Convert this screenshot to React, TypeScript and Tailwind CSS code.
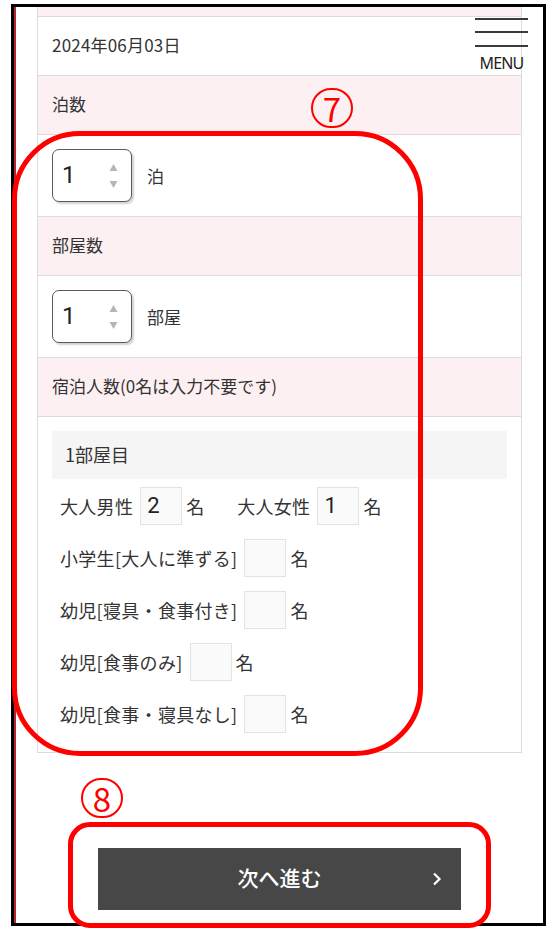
const FONT = { fontFamily: '"Noto Sans CJK JP", "Noto Sans", sans-serif' };

/** Pink heading band of the reservation table. */
function HeadRow({ label }: { label: string }) {
  return (
    <div className="flex h-[59px] items-center border-b border-[#dcdcdc] bg-[#fcf0f2] px-[14px] pb-[3px] text-[17px] text-[#333]">
      {label}
    </div>
  );
}

/** The rounded number box with a native-looking spinner. */
function Stepper({ value, unit }: { value: string; unit: string }) {
  return (
    <div className="flex h-[82px] items-center border-b border-[#dcdcdc] px-[14px]">
      <div className="flex h-[53px] w-[80px] items-center justify-between rounded-[7px] border border-[#5a5a5a] bg-white pl-[9px] pr-[13px] shadow-[2px_2px_2px_0px_rgba(0,0,0,0.18)]">
        <span className="pb-[2px] text-[24px] leading-none text-[#222]" style={{ fontFamily: "Roboto, sans-serif" }}>
          {value}
        </span>
        <svg width="9" height="26" viewBox="0 0 9 26" aria-hidden>
          <path d="M4.5 1 L8.5 8 H0.5 Z" fill="#b5b5b5" />
          <path d="M4.5 25 L8.5 18 H0.5 Z" fill="#b5b5b5" />
        </svg>
      </div>
      <span className="ml-[15px] text-[17px] text-[#333]">{unit}</span>
    </div>
  );
}

function CountBox({ value = "" }: { value?: string }) {
  return (
    <div
      className="flex h-[38px] w-[42px] items-center border border-[#e3e3e3] bg-[#fafafa] pl-[6px] text-[22px] leading-none text-[#222]"
      style={{ fontFamily: "Roboto, sans-serif" }}
    >
      {value}
    </div>
  );
}

function Guest({ label, value }: { label: string; value?: string }) {
  return (
    <div className="flex items-center">
      <span className="tracking-[0.3px]">{label}</span>
      <span className="ml-[7px]">
        <CountBox value={value} />
      </span>
      <span className="ml-[4px]">名</span>
    </div>
  );
}

function Circled({ n }: { n: string }) {
  return (
    <div className="flex h-[40px] w-[42px] items-center justify-center rounded-full border-2 border-[#ff0000] text-[33px] leading-none text-[#ff0000]">
      {n}
    </div>
  );
}

export default function App() {
  return (
    <div className="relative h-[945px] w-[556px] overflow-hidden bg-white" style={FONT}>
      <div className="ml-[11px] mt-[4px] h-[922px] w-[535px] border-[3px] border-black">
        <div className="flex h-full flex-col border-l-2 border-[#b4272f]">
          <div className="ml-[21px] w-[485px] border-x border-[#dcdcdc]">
            <div className="h-[10px] border-b border-[#dcdcdc] bg-[#fcf0f2]" />
            <div className="flex h-[59px] items-center border-b border-[#dcdcdc] px-[14px] pb-[3px] text-[17px] tracking-[0.2px] text-[#333]">
              2024年06月03日
            </div>
            <HeadRow label="泊数" />
            <Stepper value="1" unit="泊" />
            <HeadRow label="部屋数" />
            <Stepper value="1" unit="部屋" />
            <HeadRow label="宿泊人数(0名は入力不要です)" />
            <div className="h-[336px] border-b border-[#dcdcdc] px-[14px] pt-[14px] text-[18px] text-[#333]">
              <div className="flex h-[48px] items-center bg-[#f5f5f5] pb-[2px] pl-[13px]">1部屋目</div>
              <div className="mt-[8px] flex flex-col gap-[14px] pl-[8px]">
                <div className="flex items-center gap-[33px]">
                  <Guest label="大人男性" value="2" />
                  <Guest label="大人女性" value="1" />
                </div>
                <Guest label="小学生[大人に準ずる]" />
                <Guest label="幼児[寝具・食事付き]" />
                <Guest label="幼児[食事のみ]" />
                <Guest label="幼児[食事・寝具なし]" />
              </div>
            </div>
          </div>

          <button
            type="button"
            className="relative mx-auto mt-[95px] flex h-[62px] w-[363px] items-center justify-center bg-[#474747] pb-[2px] text-[21px] font-medium text-white"
          >
            次へ進む
            <svg className="absolute right-[19px] top-[24px]" width="10" height="14" viewBox="0 0 10 14" aria-hidden>
              <path d="M2 1.5 L7.5 7 L2 12.5" stroke="#fff" strokeWidth="2.2" fill="none" />
            </svg>
          </button>
        </div>
      </div>

      {/* fixed header menu */}
      <div className="absolute left-[475px] top-[18px] flex w-[53px] flex-col items-center">
        <div className="h-[2px] w-full bg-[#3a3a3a]" />
        <div className="mt-[11px] h-[2px] w-full bg-[#3a3a3a]" />
        <div className="mt-[12px] h-[2px] w-full bg-[#3a3a3a]" />
        <span
          className="mt-[8px] text-[16px] leading-none tracking-[-0.8px] text-[#222]"
          style={{ fontFamily: '"Noto Sans", sans-serif' }}
        >
          MENU
        </span>
      </div>

      {/* annotations */}
      <div className="absolute left-[12px] top-[131px] h-[625px] w-[411px] rounded-[68px] border-[5px] border-[#ff0000]" />
      <div className="absolute left-[311px] top-[88px]">
        <Circled n="7" />
      </div>
      <div className="absolute left-[81px] top-[778px]">
        <Circled n="8" />
      </div>
      <div className="absolute left-[68px] top-[822px] h-[106px] w-[423px] rounded-[22px] border-[5px] border-[#ff0000]" />
    </div>
  );
}
